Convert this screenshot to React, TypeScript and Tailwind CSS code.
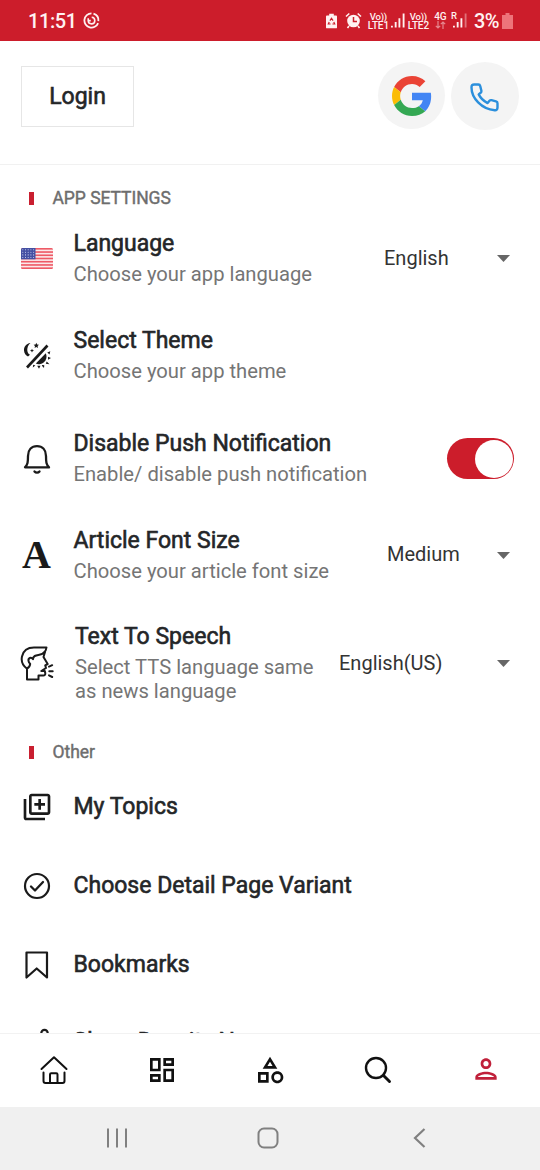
import React from 'react';
import { MdOutlineCategory, MdOutlineDashboard, MdOutlineLibraryAdd, MdOutlinePerson } from 'react-icons/md';

interface IconProps {
  className?: string;
}

const DataSaverIcon = () => (
  <svg width="17" height="17" viewBox="0 0 17 17" fill="none" stroke="currentColor" strokeWidth="1.800">
    <path d="M8.500 1.400a7.100 7.100 0 1 0 6.600 9.700" />
    <path d="M10.500 1.700a7.100 7.100 0 0 1 4.900 7.400" />
    <path d="M5.200 6.200v2.600a3.300 3.300 0 1 0 3.500-3.500M5.200 8.600h2.600" strokeWidth="1.600" />
  </svg>
);

const BatterySaverIcon = () => (
  <svg width="11" height="16" viewBox="0 0 12 16">
    <path d="M3.500 0h5v2H11a1 1 0 0 1 1 1v12a1 1 0 0 1-1 1H1a1 1 0 0 1-1-1V3a1 1 0 0 1 1-1h2.500z" fill="currentColor" />
    <path d="M4.300 7.500L6 5l1.700 2.500M8.500 9l1 2.300H7M5 11.300H2.500l1-2.300" fill="none" stroke="#cc1d2b" strokeWidth="1.300" />
  </svg>
);

const AlarmIcon = () => (
  <svg width="17" height="17" viewBox="0 0 17 17">
    <circle cx="8.500" cy="9" r="6.300" fill="currentColor" />
    <path d="M1 4.500L4.300 1.500M16 4.500L12.700 1.500M4 14l-1.500 2M13 14l1.500 2" stroke="currentColor" strokeWidth="1.600" />
    <path d="M8.500 5v4.500h3.500" fill="none" stroke="#cc1d2b" strokeWidth="1.500" />
  </svg>
);

const SignalIcon = ({ faded = false }: { faded?: boolean }) => (
  <svg width="14" height="15" viewBox="0 0 15 15" fill="currentColor">
    <path d="M0 13h2v2H0zM4 9h2v6H4zM8 5h2v10H8z" />
    <path d="M12.500 0h2v15h-2z" opacity={faded ? 0.4 : 1} />
  </svg>
);

const Volte = ({ line }: { line: string }) => (
  <div className="flex w-[21px] flex-col items-center text-[9.500px] leading-[9px] font-medium">
    <span className="tracking-[-0.2px]">Vo))</span>
    <span className="text-[10px] tracking-[-0.1px]">{line}</span>
  </div>
);

const StatusBar = () => (
  <div className="flex h-[41px] shrink-0 items-center bg-[#cc1d2b] pl-7 text-[#fff1f1]">
    <span className="w-[48px] text-[20px] font-medium tracking-[-0.4px]">11:51</span>
    <span className="ml-[7px]"><DataSaverIcon /></span>
    <div className="mr-[27px] ml-auto flex items-center">
      <BatterySaverIcon />
      <span className="ml-2"><AlarmIcon /></span>
      <span className="ml-1.5"><Volte line="LTE1" /></span>
      <span className="ml-[2px]"><SignalIcon /></span>
      <span className="ml-[3px]"><Volte line="LTE2" /></span>
      <div className="ml-[5px] flex w-[13px] flex-col items-center text-[10px] leading-[9px] font-medium">
        <span>4G</span>
        <svg width="11" height="8" viewBox="0 0 11 8" fill="none" stroke="currentColor" strokeWidth="1.200" opacity="0.5">
          <path d="M3 0v7M.8 4.800L3 7l2.200-2.200M8 8V1M5.800 3.200L8 1l2.200 2.200" />
        </svg>
      </div>
      <div className="relative ml-[6px]">
        <SignalIcon faded />
        <span className="absolute -top-[2px] -left-[2px] text-[9.500px] leading-[9px] font-medium">R</span>
      </div>
      <span className="mt-px ml-[7px] text-[20px] font-medium tracking-[-0.5px]">3%</span>
      <svg className="ml-[3px] text-[#ee747a]" width="11" height="16" viewBox="0 0 11 16" fill="currentColor">
        <path d="M3.500 0h4v2H11v14H0V2h3.500z" />
      </svg>
    </div>
  </div>
);

const GoogleLogo = () => (
  <svg width="40" height="40" viewBox="0 0 48 48">
    <path fill="#EA4335" d="M24 9.500c3.540 0 6.710 1.220 9.210 3.600l6.850-6.850C35.900 2.380 30.470 0 24 0 14.620 0 6.510 5.380 2.560 13.220l7.980 6.190C12.430 13.720 17.740 9.500 24 9.500z" />
    <path fill="#4285F4" d="M46.980 24.550c0-1.570-.15-3.090-.38-4.550H24v9.020h12.940c-.58 2.960-2.260 5.480-4.780 7.180l7.730 6c4.510-4.180 7.090-10.360 7.090-17.650z" />
    <path fill="#FBBC05" d="M10.530 28.590c-.48-1.450-.76-2.990-.76-4.590s.27-3.140.76-4.590l-7.980-6.190C.92 16.460 0 20.120 0 24c0 3.880.92 7.540 2.560 10.780l7.970-6.190z" />
    <path fill="#34A853" d="M24 48c6.480 0 11.930-2.130 15.890-5.810l-7.730-6c-2.150 1.450-4.920 2.300-8.160 2.300-6.260 0-11.570-4.220-13.470-9.910l-7.980 6.190C6.510 42.620 14.620 48 24 48z" />
  </svg>
);

const PhoneIcon = () => (
  <svg className="mt-1" width="30" height="30" viewBox="0 0 30 30" fill="none" stroke="#2b8fdc" strokeWidth="2.400" strokeLinejoin="round">
    <path d="M1.500 4.500C1.500 2.500 2.300 1.500 4.200 1.500h4.200c1 0 1.600.5 1.800 1.400l1.200 4.900c.2.900 0 1.500-.7 2l-2 1.600c2 4 5 6.700 8.900 8.700l1.900-2.300c.5-.6 1.200-.8 2-.6l4.500 1.200c1 .3 1.500 1 1.500 1.900v4.200c0 2-1 2.900-2.800 2.700C11.500 26.200 1.500 15 1.500 4.500z" />
  </svg>
);

const FlagIcon = () => (
  <svg width="32" height="21" viewBox="0 0 32 21">
    <clipPath id="flag"><rect width="32" height="21" rx="1.500" /></clipPath>
    <g clipPath="url(#flag)">
      <rect width="32" height="21" fill="#fbe9ea" />
      {[0, 1, 2, 3, 4, 5, 6].map(i => (
        <rect key={i} y={i * 3.230} width="32" height="1.620" fill="#ee5a66" />
      ))}
      <rect width="14.500" height="11.300" fill="#4450a3" />
      {[0, 1, 2, 3].map(row => [0, 1, 2, 3, 4].map(col => (
        <circle key={`${row}-${col}`} cx={1.800 + col * 2.700} cy={1.700 + row * 2.600} r="0.550" fill="#cfd3f0" />
      )))}
    </g>
  </svg>
);

const ThemeIcon = () => (
  <svg width="28" height="28" viewBox="0 0 28 28" fill="currentColor">
    <path d="M7.500 1C3 1.500.7 5 1 8.500c.2 2.800 1.800 5 4 6L7 12.700C3.800 11.500 2.800 5 7.500 1z" />
    <path d="M13.300.8l.8 1.700 1.900.2-1.400 1.300.4 1.900-1.700-.9-1.700.9.400-1.900-1.400-1.300 1.900-.2zM9 6.700l.6 1.300 1.400.6-1.400.6L9 10.500l-.6-1.300L7 8.600 8.400 8z" />
    <path d="M24.500 3.500L4 25.500" stroke="currentColor" strokeWidth="2.600" />
    <path d="M22.800 11.300c2.200 5-1 10.500-6.300 10.900-1.600.1-2.700-.2-3.700-.7z" />
    <path d="M24.300 10.500l3-1.300-.8 3.300zM25 14.700l3 1.300-3 1.700zM23.700 19.500l2.800 2.800-3.700-.6zM19.300 23l2 .2-.3 2.800-2.200-2.300zM14.200 23.800h3.300l-1.500 3zM10.200 22.700l2.200.7-2.600 2z" />
  </svg>
);

const BellIcon = () => (
  <svg width="28" height="32" viewBox="0 0 28 32" fill="none" stroke="currentColor" strokeWidth="2.300" strokeLinejoin="round" strokeLinecap="round">
    <path d="M2 24.300c2.700-2.800 3-5 3-11.300C5 7 8.500 3.200 14 3.200S23 7 23 13c0 6.300.3 8.500 3 11.300z" />
    <path d="M11.500 28.500c1.300 1.600 3.700 1.600 5 0" />
  </svg>
);

const SpeechIcon = () => (
  <svg width="34" height="35" viewBox="0 0 34 35" fill="none" stroke="currentColor" strokeWidth="2" strokeLinejoin="round" strokeLinecap="round">
    <path d="M6.800 22.500C2.800 19.500 1 15 2 10.500 3.300 4.500 8 1.500 14 1.500h12.500c-.3 2.500-1.200 4.300-2.800 5.300" />
    <path d="M25 6c-4 3.700-7 2.300-10.300 4-1.500.8-1.700 2-1.700 3.300-2-3-5-1-4.500 1.500.2 1.500 1 2.500 1.700 3-.2 2-1.200 3.700-3.200 4.700V33.500h11.500v-4h4.800c1.400 0 2.200-1 2-2.300l-.5-2.200h-3.500l4.700-3-.8-2.700 2.500-1.300-4.200-7z" />
    <path d="M29 20.700l3.200-1.500M29.300 25.200h3.400M29 29.300l3.200 1.700" />
  </svg>
);

const CheckIcon = () => (
  <svg width="28" height="28" viewBox="0 0 28 28" fill="none" stroke="currentColor" strokeWidth="2.200" strokeLinecap="round" strokeLinejoin="round">
    <circle cx="14" cy="14" r="12" />
    <path d="M8 14.500l4 4 8-8.500" strokeWidth="2.300" />
  </svg>
);

const BookmarkIcon = () => (
  <svg width="28" height="28" viewBox="0 0 28 28" fill="none" stroke="currentColor" strokeWidth="2.200" strokeLinejoin="round">
    <path d="M3.500 1.500h20.500v25L13.700 17.500 3.500 26.500z" />
  </svg>
);

const ShareIcon = () => (
  <svg width="28" height="28" viewBox="0 0 28 28" fill="none" stroke="currentColor" strokeWidth="2.200">
    <circle cx="21.500" cy="5" r="3.200" />
    <circle cx="6" cy="14" r="3.200" />
    <circle cx="21.500" cy="23" r="3.200" />
    <path d="M9 12.500l10-6M9 15.500l10 6" />
  </svg>
);

const HomeIcon = () => (
  <svg width="28" height="30" viewBox="0 0 28 30" fill="none" stroke="currentColor" strokeWidth="2" strokeLinecap="round" strokeLinejoin="round">
    <path d="M1.500 14L14 2.200 26.500 14" />
    <path d="M3.500 17.500v8.500c0 1.300.7 2 2 2h17c1.300 0 2-.7 2-2v-8.500" />
    <path d="M10 28v-8.500c0-.8.500-1.200 1.200-1.200h5.100c.7 0 1.200.4 1.200 1.200V28" />
  </svg>
);

const SearchIcon = () => (
  <svg width="28" height="28" viewBox="0 0 28 28" fill="none" stroke="currentColor" strokeWidth="2.400" strokeLinecap="round">
    <circle cx="12" cy="12" r="10" />
    <path d="M19.500 19.500l6 6" strokeWidth="2.900" />
  </svg>
);

const Caret = ({ className = '' }: IconProps) => (
  <svg className={className} width="13" height="7" viewBox="0 0 13 7" fill="#666">
    <path d="M0 0h13L6.500 7z" />
  </svg>
);

const titleClass = 'text-[23px] leading-[26px] text-[#242628] [-webkit-text-stroke:0.6px_#242628]';

const SectionTitle = ({ className, children }: { className: string; children: React.ReactNode }) => (
  <div className={`flex shrink-0 items-center pl-[29px] text-[17.500px] tracking-[-0.05px] text-[#6d6d6d] [-webkit-text-stroke:0.4px_#6d6d6d] ${className}`}>
    <span className="mr-[18.500px] h-[13px] w-[5px] bg-[#c91f30]" />
    {children}
  </div>
);

interface SettingRowProps {
  className: string;
  icon: React.ReactNode;
  title: string;
  description: string;
  children?: React.ReactNode;
}

const SettingRow = ({ className, icon, title, description, children }: SettingRowProps) => (
  <div className={`flex shrink-0 items-center text-[#1a1a1a] ${className}`}>
    <span className="mr-[0.500px] flex w-[73px] shrink-0 justify-center">{icon}</span>
    <div className="whitespace-nowrap">
      <h3 className={titleClass}>{title}</h3>
      <p className="mt-[5px] text-[20.200px] leading-6 whitespace-pre-line text-[#757575]">{description}</p>
    </div>
    {children}
  </div>
);

const Select = ({ value, className }: { value: string; className: string }) => (
  <div className={`-mt-[2px] ml-auto flex items-center justify-between pr-[30px] text-[20px] whitespace-nowrap text-[#333] ${className}`}>
    {value}
    <Caret className="mt-[2px]" />
  </div>
);

const LinkRow = ({ icon, title }: { icon: React.ReactNode; title: string }) => (
  <div className="flex h-[79px] shrink-0 items-center text-[#1a1a1a] last:-mt-[1.500px]">
    <span className="mr-[0.500px] flex w-[73px] justify-center">{icon}</span>
    <h3 className={titleClass}>{title}</h3>
  </div>
);

const BottomNav = () => (
  <nav className="grid h-[74px] shrink-0 grid-cols-5 place-items-center border-t border-[#f2f2f2] bg-white pb-[2px] text-[#111]">
    <HomeIcon />
    <MdOutlineDashboard size={32} />
    <MdOutlineCategory size={32} />
    <SearchIcon />
    <MdOutlinePerson size={32} className="-mt-[2px] text-[#c0203a]" />
  </nav>
);

const SystemBar = () => (
  <div className="flex h-[63px] shrink-0 items-center bg-[#f0f0f0] pb-[2px] pl-[106px] text-[#808080]">
    <svg width="22" height="22" viewBox="0 0 22 22" stroke="currentColor" strokeWidth="2">
      <path d="M2 1.500v19M11 1.500v19M20 1.500v19" />
    </svg>
    <svg className="ml-[129px]" width="22" height="22" viewBox="0 0 22 22" fill="none" stroke="currentColor" strokeWidth="2">
      <rect x="1.500" y="1.500" width="19" height="19" rx="5.500" />
    </svg>
    <svg className="ml-[134px]" width="13" height="22" viewBox="0 0 13 22" fill="none" stroke="currentColor" strokeWidth="2.200">
      <path d="M11.500 2L2 11l9.500 9" />
    </svg>
  </div>
);

export default function App() {
  return (
    <div className="flex h-[1170px] w-[540px] flex-col overflow-hidden bg-white font-['Roboto',sans-serif]">
      <StatusBar />
      <header className="flex h-[124px] shrink-0 items-start border-b border-[#f1f1f1] pr-[21px] pl-[21px]">
        <button className={`mt-[25px] h-[61px] w-[113px] border border-[#e6e6e6] ${titleClass}`}>Login</button>
        <div className="mt-[21px] ml-auto flex gap-1.5">
          <button className="flex size-[67px] items-center justify-center rounded-full bg-[#f4f4f4]"><GoogleLogo /></button>
          <button className="flex size-17 items-center justify-center rounded-full bg-[#f4f4f4]"><PhoneIcon /></button>
        </div>
      </header>
      <main className="flex min-h-0 flex-1 flex-col overflow-hidden">
        <SectionTitle className="h-[45px] pt-[22px]">APP SETTINGS</SectionTitle>
        <SettingRow className="h-[97px]" icon={<FlagIcon />} title="Language" description="Choose your app language">
          <Select value="English" className="w-[156px]" />
        </SettingRow>
        <SettingRow className="h-[97px]" icon={<ThemeIcon />} title="Select Theme" description="Choose your app theme" />
        <SettingRow className="h-[109px]" icon={<BellIcon />} title="Disable Push Notification" description="Enable/ disable push notification">
          <button className="mr-[26px] ml-auto flex h-[41px] w-[67px] items-center justify-end rounded-full bg-[#cc1d2b] pr-px">
            <span className="size-[38px] rounded-full bg-white" />
          </button>
        </SettingRow>
        <SettingRow
          className="h-[84px]"
          icon={<span className="font-['Liberation_Serif',serif] text-[40px] leading-10 font-bold">A</span>}
          title="Article Font Size"
          description="Choose your article font size"
        >
          <Select value="Medium" className="w-[153px]" />
        </SettingRow>
        <SettingRow
          className="h-[133px] gap-x-[1.500px]"
          icon={<SpeechIcon />}
          title="Text To Speech"
          description={'Select TTS language same\nas news language'}
        >
          <Select value="English(US)" className="w-[201px]" />
        </SettingRow>
        <SectionTitle className="h-[37px] pt-[7px]">Other</SectionTitle>
        <LinkRow icon={<MdOutlineLibraryAdd size={32} />} title="My Topics" />
        <LinkRow icon={<CheckIcon />} title="Choose Detail Page Variant" />
        <LinkRow icon={<BookmarkIcon />} title="Bookmarks" />
        <LinkRow icon={<ShareIcon />} title="Share Daynity News" />
      </main>
      <BottomNav />
      <SystemBar />
    </div>
  );
}
